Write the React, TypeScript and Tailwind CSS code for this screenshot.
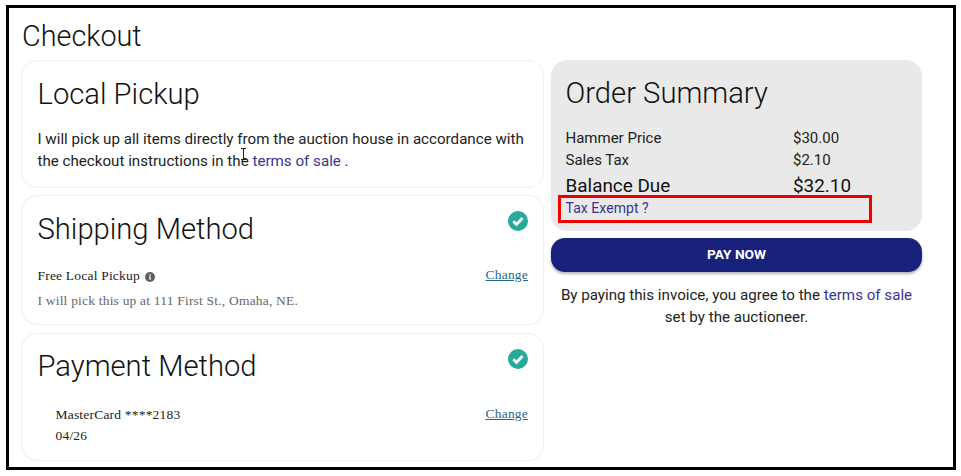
import React from 'react';

function CheckBadge() {
  return (
    <svg viewBox="0 0 20 20" className="h-5 w-5 shrink-0">
      <circle cx="10" cy="10" r="10" fill="#26ab9b" />
      <path d="M5.4 10.3l3.1 3.1 6-6.4" fill="none" stroke="#fff" strokeWidth="2.8" />
    </svg>
  );
}

function InfoDot() {
  return (
    <svg viewBox="0 0 10 10" className="h-[10px] w-[10px] ml-[5px] mt-[2px]">
      <circle cx="5" cy="5" r="5" fill="#5f5f5f" />
      <rect x="4.3" y="4.3" width="1.4" height="3.4" fill="#fff" />
      <rect x="4.3" y="2.2" width="1.4" height="1.3" fill="#fff" />
    </svg>
  );
}

function CardTitle({ children }: { children: React.ReactNode }) {
  return <h2 className="text-[29.2px] leading-[38px] font-light text-[#111]">{children}</h2>;
}

export default function App() {
  return (
    <div className="w-[961px] h-[476px] bg-white pt-[5px] pl-[6px] pr-[5px] pb-[6px] font-['Roboto',sans-serif]">
      <div className="relative h-full border-[3px] border-black pl-[12px] pt-[10px]">
        <h1 className="text-[28.8px] leading-[36px] font-light text-[#111] ml-[1px]">Checkout</h1>

        <div className="flex gap-[7px] mt-[6px]">
          <div className="w-[523px] flex flex-col">
            <section className="h-[128px] rounded-[16px] border border-[#eeeeee] pl-[15.5px] pr-[15px] pt-[14px]">
              <CardTitle>Local Pickup</CardTitle>
              <p className="mt-[15px] text-[15.15px] leading-[22px] text-[#222]">
                I will pick up all items directly from the auction house in accordance with the checkout instructions in the{' '}
                <span className="text-[#3a3490]">terms of sale</span> .
              </p>
            </section>

            <section className="mt-[7px] h-[130px] rounded-[16px] border border-[#eeeeee] pl-[15.5px] pr-[15px] pt-[14px] font-['Liberation_Serif',serif]">
              <div className="flex justify-between items-start">
                <div className="font-['Roboto',sans-serif]"><CardTitle>Shipping Method</CardTitle></div>
                <div className="mt-[1px]"><CheckBadge /></div>
              </div>
              <div className="mt-[20px] flex justify-between text-[13.5px] leading-[16px]">
                <div className="flex items-center text-[#222] tracking-[0.2px]">Free Local Pickup<InfoDot /></div>
                <a className="text-[#1d6a8c] underline tracking-[0.2px] -mt-[1px]">Change</a>
              </div>
              <p className="mt-[9px] text-[13.5px] leading-[16px] text-[#666] tracking-[0.2px]">I will pick this up at 111 First St., Omaha, NE.</p>
            </section>

            <section className="mt-[8px] h-[128px] rounded-[16px] border border-[#eeeeee] pl-[15.5px] pr-[15px] pt-[13px] font-['Liberation_Serif',serif]">
              <div className="flex justify-between items-start">
                <div className="font-['Roboto',sans-serif]"><CardTitle>Payment Method</CardTitle></div>
                <div className="mt-[2px]"><CheckBadge /></div>
              </div>
              <div className="mt-[19px] flex justify-between text-[13.5px] leading-[21px]">
                <div className="pl-[18px] text-[#222] tracking-[0.2px]">
                  <div>MasterCard ****2183</div>
                  <div>04/26</div>
                </div>
                <a className="text-[#1d6a8c] underline tracking-[0.2px] leading-[16px] mt-[2px] self-start">Change</a>
              </div>
            </section>
          </div>

          <div className="w-[371px]">
            <section className="h-[171px] rounded-[16px] bg-[#e9e9e9] pl-[14.5px] pt-[14px]">
              <CardTitle>Order Summary</CardTitle>
              <div className="mt-[15px] text-[#222] text-[15px] leading-[22px]">
                <div className="flex"><span className="w-[227.5px]">Hammer Price</span><span>$30.00</span></div>
                <div className="flex"><span className="w-[227.5px]">Sales Tax</span><span>$2.10</span></div>
                <div className="flex text-[18.9px] leading-[26px] text-[#111] mt-[2px]"><span className="w-[227.5px]">Balance Due</span><span>$32.10</span></div>
                <a className="block text-[14px] leading-[20px] tracking-[0.05px] text-[#3a3490] -mt-[1px]">Tax Exempt ?</a>
              </div>
            </section>

            <button className="mt-[7px] h-[34px] w-full rounded-[14px] bg-[#18227c] pb-[2px] text-white text-[13.7px] font-bold shadow-[0_2px_3px_rgba(0,0,0,0.3)]">
              PAY NOW
            </button>

            <p className="mt-[12px] text-center text-[15.15px] leading-[22px] text-[#222]">
              By paying this invoice, you agree to the <span className="text-[#3a3490]">terms of sale</span>
              <br />
              set by the auctioneer.
            </p>
          </div>
        </div>

        {/* annotation box from the screenshot */}
        <div className="absolute left-[549px] top-[187px] w-[314px] h-[28px] border-[3px] border-[#ee0000]" />

        {/* text cursor */}
        <svg viewBox="0 0 7 12" className="absolute left-[231px] top-[140px] w-[7px] h-[12px]">
          <path d="M1 .5h5M3.5 .5v11M1 11.5h5" fill="none" stroke="#222" strokeWidth="1" />
        </svg>
      </div>
    </div>
  );
}
